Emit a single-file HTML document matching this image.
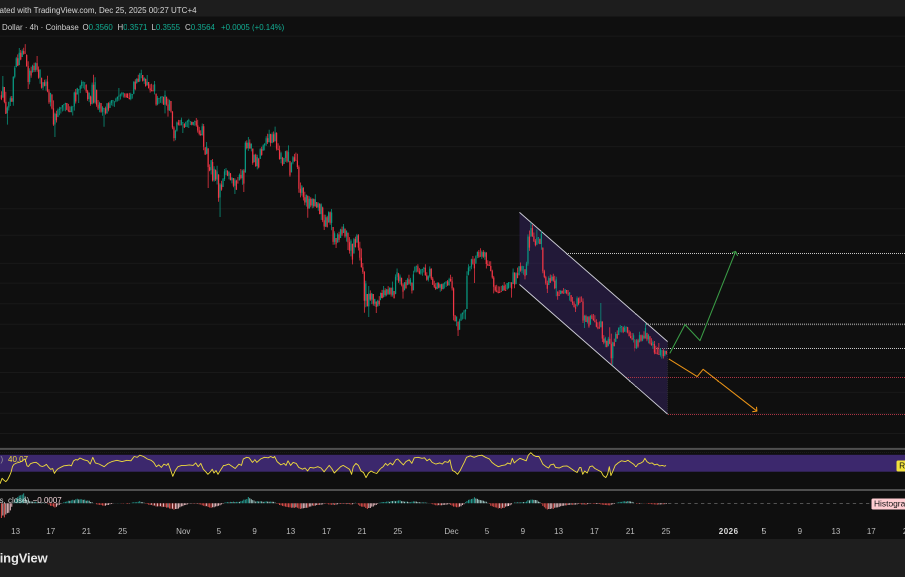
<!DOCTYPE html>
<html><head><meta charset="utf-8"><title>Chart</title>
<style>
html,body{margin:0;padding:0;background:#0f0f0f;}
body{width:905px;height:577px;overflow:hidden;position:relative;font-family:"Liberation Sans",sans-serif;}
#outer{position:absolute;left:0;top:0;width:1810px;height:1154px;transform:scale(0.5);transform-origin:0 0;will-change:transform;overflow:hidden}

#wrap{position:absolute;left:0;top:0;width:1810px;height:1154px;overflow:hidden;background:#0f0f0f;}
#wrap svg{position:absolute;left:0;top:0;width:1810px;height:1154px}
#hdr{position:absolute;left:0;top:0;width:1810px;height:33.2px;background:#1d1d1d;}
#txt{position:absolute;left:0;top:0;width:1810px;height:1154px;}
.hd{position:absolute;left:-1px;top:0px;line-height:41px;font-size:16px;color:#d6d6d6;white-space:nowrap;}
#ftr{position:absolute;left:0;top:1077.6px;width:1810px;height:76.4px;background:#1e1e1e;}
.ft{position:absolute;left:-0.6px;top:1098.2px;line-height:36px;font-size:25.8px;font-weight:bold;color:#e9e9e9;white-space:nowrap;letter-spacing:-0.2px}
.lg{position:absolute;top:42.6px;line-height:24px;font-size:15.8px;white-space:nowrap;color:#d0d0d0}
.t{color:#12ad93}
.tl{position:absolute;top:1051px;width:80px;text-align:center;font-size:16px;line-height:24px;color:#bcbcbc;white-space:nowrap}
.tl.b{font-weight:bold;color:#d8d8d8;letter-spacing:1px;text-indent:1px}
.sm{position:absolute;font-size:16px;line-height:24px;white-space:nowrap}
.tag{position:absolute;font-size:16.8px;line-height:22px;white-space:nowrap;color:#131313;border-radius:3px;padding-left:5.2px}
</style></head><body><div id="outer">
<div id="wrap">
<div id="ftr"></div>
<svg viewBox="0 0 905 577" preserveAspectRatio="none">
<path d="M0 36.1H905M0 66.2H905M0 90.6H905M0 117.3H905M0 146.6H905M0 176.0H905M0 208.8H905M0 235.2H905M0 263.4H905M0 283.1H905M0 303.7H905M0 324.3H905M0 348.2H905M0 372.5H905M0 392.4H905M0 413.3H905M0 433.5H905" stroke="#191919" stroke-width="1" fill="none"/>
<polygon points="519.5,212.4 667.6,341.6 667.6,414.1 519.5,284.5" fill="#2e2152" fill-opacity="0.62"/>
<path d="M566 253.5H905M668 348.5H905" stroke="#c8c8c8" stroke-width="1" stroke-dasharray="1 1" fill="none"/>
<path d="M654 348.5H668" stroke="#8a8a8a" stroke-width="1" stroke-dasharray="1 1" fill="none"/>
<path d="M646 324.3H905" stroke="#858585" stroke-width="1.7" stroke-dasharray="1 1" fill="none"/>
<path d="M626 377.5H905M668 414.5H905" stroke="#ac3444" stroke-width="1" stroke-dasharray="1 1" fill="none"/>
<path d="M667.6 342V414" stroke="#2c2c30" stroke-width="0.8" stroke-dasharray="1 1" fill="none"/>
<path d="M519.5 212.4L667.6 341.6M519.5 284.5L667.6 414.1" stroke="#cfcfd8" stroke-width="0.92" fill="none"/>
<g>
<path d="M2.87 76.0V97.9M7.34 106.2V124.6M8.82 101.8V110.5M10.31 96.4V106.0M13.29 76.2V105.8M14.77 66.1V78.4M16.26 56.9V67.4M19.24 48.0V65.2M22.21 49.4V57.0M29.65 68.3V84.4M32.62 64.8V72.8M35.60 62.4V71.9M40.06 69.3V83.8M43.04 82.1V90.1M46.01 79.3V90.6M50.47 92.8V106.4M54.94 112.6V137.0M57.91 108.5V117.0M59.40 106.9V115.2M60.89 107.3V113.5M62.37 105.1V111.5M63.86 104.3V110.8M65.35 102.9V111.2M71.30 105.8V112.3M72.79 106.4V115.5M74.27 91.6V110.6M77.25 87.9V94.5M78.74 89.3V103.0M80.22 84.9V93.1M81.71 80.3V88.6M83.20 81.7V88.3M84.69 82.4V89.6M89.15 92.4V102.3M92.12 82.5V104.4M95.10 77.3V103.7M99.56 101.8V112.2M102.54 106.1V115.7M104.02 108.0V126.7M107.00 103.2V114.0M109.97 101.2V108.0M111.46 100.1V105.4M112.95 100.3V106.3M114.44 101.4V106.9M115.92 97.7V102.3M117.41 96.5V101.5M118.90 88.0V100.8M120.39 93.5V99.5M121.87 91.9V96.5M123.36 92.6V97.5M130.80 92.8V100.3M132.29 94.1V98.6M133.77 81.3V94.2M136.75 78.2V83.8M139.72 72.9V82.0M141.21 69.8V78.3M144.19 77.2V83.9M147.16 75.0V85.7M154.60 81.0V94.4M157.57 95.9V105.2M159.06 98.3V103.8M160.55 96.4V102.9M162.04 96.3V103.5M165.01 90.6V113.4M169.47 99.6V111.0M175.42 129.7V140.2M176.91 121.5V131.6M181.37 117.6V125.5M182.86 122.2V133.0M185.84 121.6V127.0M187.32 120.0V127.1M188.81 118.7V128.0M190.30 121.2V125.0M193.27 122.0V125.5M194.76 120.5V125.7M202.20 123.5V135.8M206.66 142.0V154.4M211.12 160.1V174.5M214.10 166.2V181.7M217.07 165.7V184.5M220.05 183.1V217.0M223.02 178.0V187.0M224.51 169.0V181.0M226.00 168.0V175.1M228.97 171.4V179.2M231.95 177.1V183.4M234.92 178.3V194.0M239.39 173.5V180.5M242.36 169.6V184.8M245.34 141.3V172.7M248.31 137.0V150.9M251.29 143.3V151.4M254.26 154.0V162.8M257.24 154.7V169.4M260.21 148.3V158.9M263.19 144.4V150.6M264.67 143.2V150.4M266.16 136.3V145.9M269.14 129.8V142.2M272.11 132.4V143.3M275.09 126.6V141.3M281.04 151.8V163.2M284.01 157.9V164.0M285.50 150.9V161.9M288.47 145.4V162.2M291.45 162.3V172.4M292.94 156.0V164.3M301.86 185.1V195.6M306.32 194.5V206.6M309.30 196.2V208.7M312.27 198.3V208.2M315.25 194.3V206.8M318.22 202.2V210.8M321.20 203.4V219.9M325.66 214.7V227.0M328.64 211.4V222.8M331.61 209.0V230.2M334.59 231.2V244.6M337.56 233.1V242.6M340.54 228.7V238.0M343.51 224.0V233.0M346.49 230.4V241.6M350.95 239.2V256.4M353.92 237.9V253.6M356.90 233.9V242.6M365.82 280.8V307.2M368.80 286.0V317.0M371.77 292.9V304.1M374.75 298.7V306.1M377.72 299.8V306.5M380.70 292.5V300.2M383.67 286.0V297.6M386.65 288.9V296.3M389.62 287.5V294.7M392.60 281.6V296.6M395.57 274.4V294.2M397.06 268.5V280.2M400.04 274.5V284.5M404.50 282.1V290.3M407.47 277.9V285.3M410.45 277.9V285.7M413.42 270.7V290.3M414.91 266.5V272.6M416.40 265.8V272.4M420.86 269.2V274.7M422.35 268.9V275.7M423.84 266.9V272.5M428.30 275.4V281.5M429.79 266.4V277.6M437.22 282.1V289.1M440.20 284.2V291.8M443.17 283.2V289.3M444.66 282.4V288.5M446.15 281.4V287.0M449.12 277.7V285.9M456.56 316.4V326.3M459.54 318.7V329.8M461.02 313.4V320.9M462.51 312.5V319.5M464.00 310.0V318.9M465.49 309.4V319.5M466.97 271.3V309.0M468.46 264.3V275.4M469.95 266.1V271.3M471.44 258.8V269.2M475.90 255.4V264.0M477.39 251.5V258.1M481.85 250.5V258.9M484.82 251.7V259.7M502.67 284.9V290.9M507.14 283.0V289.8M508.62 282.1V288.5M510.11 282.4V287.8M513.09 268.5V284.0M516.06 272.2V284.3M519.04 266.2V275.5M522.01 265.6V273.3M523.50 266.4V274.7M526.47 261.7V275.3M527.96 234.4V265.7M530.94 222.6V236.6M536.89 229.4V245.1M538.38 237.1V243.6M541.35 231.0V249.7M548.79 276.2V285.0M551.76 275.1V281.2M556.22 276.7V296.2M560.69 290.2V294.1M565.15 289.0V293.5M569.61 292.1V300.6M577.05 296.4V306.5M584.49 314.9V328.0M587.46 316.1V323.5M590.44 315.2V324.9M600.85 303.0V327.2M605.31 336.7V347.1M608.29 336.9V346.4M612.75 341.7V365.2M615.72 332.1V341.9M618.70 327.4V335.1M620.19 325.0V332.3M621.67 326.0V332.5M624.65 325.6V331.7M626.14 326.6V332.5M633.57 333.3V342.5M636.55 339.0V349.0M639.52 331.7V342.5M642.50 334.8V341.3M645.47 323.4V338.8M648.45 333.9V343.4M652.91 340.5V348.9M660.35 348.1V356.6M661.84 350.4V358.6M664.81 350.5V356.3" stroke="#089981" stroke-width="0.75" fill="none" />
<path d="M1.39 91.2V100.1M4.36 87.0V103.3M5.85 91.8V113.9M11.80 96.0V101.7M17.75 54.4V65.9M20.72 50.0V60.3M23.70 47.8V54.8M25.19 44.1V53.6M26.67 54.3V66.8M28.16 61.3V89.0M31.14 66.7V77.7M34.11 62.7V72.1M37.09 56.0V71.8M38.57 66.5V78.8M41.55 77.8V88.6M44.52 79.8V86.4M47.50 75.8V92.2M48.99 89.2V103.9M51.96 94.2V109.4M53.45 100.4V125.9M56.42 110.8V122.5M66.84 103.0V110.1M68.32 103.9V112.1M69.81 106.3V112.1M75.76 89.0V103.5M86.17 84.1V93.0M87.66 89.9V100.9M90.64 95.6V105.8M93.61 74.7V103.5M96.59 89.7V106.8M98.07 100.0V110.0M101.05 103.0V112.8M105.51 106.6V114.6M108.49 102.2V111.4M124.85 93.0V97.7M126.34 93.4V97.5M127.82 93.4V98.0M129.31 92.9V99.4M135.26 79.2V90.3M138.24 74.7V82.1M142.70 75.0V81.6M145.67 78.5V86.7M148.65 82.0V88.4M150.14 84.2V92.6M151.62 83.8V91.2M153.11 84.6V91.2M156.09 93.5V105.7M163.52 96.8V104.8M166.50 96.8V105.7M167.99 98.6V116.6M170.96 101.0V112.6M172.45 111.1V129.3M173.94 126.3V141.2M178.40 119.9V125.5M179.89 120.0V125.5M184.35 123.3V128.0M191.79 121.8V125.4M196.25 118.0V126.7M197.74 119.8V132.6M199.22 126.9V135.4M200.71 130.3V135.7M203.69 124.0V150.2M205.17 147.1V155.0M208.15 148.1V188.0M209.64 164.4V171.3M212.61 159.0V181.5M215.59 169.4V181.0M218.56 174.2V201.8M221.54 180.7V190.7M227.49 170.2V176.1M230.46 173.0V180.3M233.44 178.1V187.2M236.41 179.8V189.9M237.90 177.0V183.4M240.87 169.0V179.5M243.85 169.1V192.0M246.82 140.4V149.4M249.80 139.4V148.8M252.77 148.5V164.8M255.75 153.8V166.9M258.72 157.9V168.4M261.70 146.8V155.7M267.65 133.8V144.0M270.62 133.7V146.4M273.60 131.5V142.2M276.57 132.3V150.5M278.06 143.3V150.1M279.55 145.6V159.8M282.52 156.9V166.0M286.99 150.2V162.8M289.96 160.7V176.7M294.42 153.9V161.9M295.91 152.6V160.6M297.40 153.8V169.0M298.89 165.4V192.8M300.37 182.5V197.4M303.35 187.1V200.5M304.84 191.7V205.2M307.81 195.4V217.7M310.79 197.2V207.2M313.76 198.5V207.7M316.74 202.0V208.0M319.71 203.2V214.1M322.69 206.6V222.1M324.17 214.6V230.0M327.15 215.7V227.5M330.12 211.5V224.8M333.10 227.0V244.7M336.07 238.0V248.0M339.05 231.7V242.2M342.02 226.6V236.1M345.00 228.6V237.7M347.97 232.4V250.0M349.46 237.1V253.6M352.44 243.5V264.4M355.41 236.6V247.5M358.39 234.1V250.5M359.87 241.8V260.5M361.36 248.5V267.6M362.85 263.0V273.9M364.34 271.1V312.7M367.31 294.0V306.4M370.29 290.4V300.9M373.26 294.0V305.6M376.24 301.3V313.0M379.21 296.1V305.9M382.19 289.9V298.4M385.16 288.3V296.5M388.14 286.1V294.7M391.11 287.7V296.6M394.09 291.0V298.4M398.55 272.9V282.9M401.52 277.8V286.4M403.01 283.4V298.6M405.99 280.0V288.7M408.96 274.7V284.7M411.94 282.3V293.5M417.89 264.3V272.3M419.37 268.1V274.2M425.32 264.3V275.7M426.81 272.2V280.7M431.27 268.3V280.0M432.76 276.9V285.0M434.25 280.8V288.0M435.74 283.1V289.9M438.71 282.2V288.4M441.69 283.7V290.7M447.64 280.0V286.0M450.61 274.7V281.8M452.10 276.9V290.5M453.59 287.4V320.4M455.07 315.0V321.6M458.05 321.5V336.0M472.92 256.0V264.6M474.41 258.5V283.0M478.87 250.0V258.0M480.36 248.3V256.6M483.34 250.1V257.9M486.31 252.0V268.5M487.80 260.2V265.7M489.29 261.2V266.0M490.77 261.2V271.3M492.26 269.7V278.7M493.75 275.9V293.4M495.24 285.2V291.7M496.72 284.7V292.3M498.21 286.3V293.4M499.70 286.5V293.0M501.19 285.9V292.1M504.16 282.0V290.8M505.65 284.5V290.9M511.60 282.3V297.6M514.57 272.2V288.2M517.55 267.6V278.3M520.52 262.5V271.7M524.99 269.3V279.4M529.45 230.5V250.9M532.42 224.8V236.9M533.91 232.5V242.0M535.40 239.1V246.4M539.86 238.8V244.2M542.84 247.3V273.3M544.32 269.8V278.3M545.81 275.8V284.7M547.30 280.6V293.0M550.27 274.5V282.8M553.25 273.8V281.8M554.74 275.8V289.2M557.71 291.2V299.7M559.20 290.1V295.8M562.17 290.6V293.5M563.66 288.0V293.6M566.64 290.0V294.3M568.12 290.0V296.0M571.10 295.1V301.6M572.59 297.0V305.1M574.07 301.2V307.3M575.56 304.3V312.0M578.54 297.5V305.2M580.02 296.6V302.6M581.51 296.4V301.6M583.00 298.4V323.0M585.97 314.7V322.0M588.95 316.0V327.8M591.92 314.1V319.1M593.41 314.0V320.7M594.90 315.2V322.3M596.39 319.3V327.4M597.88 322.2V329.2M599.36 321.5V328.7M602.34 321.3V342.0M603.82 335.1V344.2M606.80 340.7V347.3M609.77 327.2V344.2M611.26 333.6V364.4M614.24 338.6V346.4M617.21 330.4V338.8M623.16 326.6V333.1M627.62 326.9V333.4M629.11 330.2V336.4M630.60 331.5V338.3M632.09 333.0V340.2M635.06 339.0V351.4M638.04 338.8V347.7M641.01 334.5V341.6M643.99 331.2V339.2M646.96 332.9V341.2M649.94 336.2V344.4M651.42 338.2V345.8M654.40 341.0V354.2M655.89 345.7V353.8M657.38 347.2V354.3M658.86 343.0V354.9M663.32 349.1V358.5M666.30 350.7V354.7" stroke="#f23645" stroke-width="0.75" fill="none" />
<path d="M2.87 86.5V97.5M7.34 107.5V113.0M8.82 101.9V107.5M10.31 98.3V101.9M13.29 76.8V101.7M14.77 67.8V76.8M16.26 58.2V67.0M19.24 52.7V65.0M22.21 51.0V57.0M29.65 70.8V82.0M32.62 65.7V72.0M35.60 63.1V70.1M40.06 69.6V77.7M43.04 82.2V87.8M46.01 81.6V85.9M50.47 93.0V102.2M54.94 113.8V124.5M57.91 109.9V117.0M59.40 108.7V109.9M60.89 107.4V108.7M62.37 105.1V107.4M63.86 104.3V105.1M65.35 102.9V104.3M71.30 106.8V112.1M72.79 106.4V107.1M74.27 92.5V106.4M77.25 88.3V94.5M78.74 89.4V90.1M80.22 85.9V89.4M81.71 82.0V85.9M83.20 81.7V82.4M84.69 82.4V83.1M89.15 92.7V99.1M92.12 84.8V103.7M95.10 82.1V102.6M99.56 102.7V108.5M102.54 107.2V111.7M104.02 108.4V109.1M107.00 103.2V113.0M109.97 102.9V108.0M111.46 100.3V102.9M112.95 100.3V101.0M114.44 101.4V102.1M115.92 98.7V101.4M117.41 96.8V98.7M118.90 95.6V96.8M120.39 94.6V95.6M121.87 93.0V94.6M123.36 92.6V93.3M130.80 94.3V99.1M132.29 94.1V94.8M133.77 81.6V93.7M136.75 78.6V83.0M139.72 74.5V81.2M141.21 73.3V74.5M144.19 78.1V80.8M147.16 81.7V85.0M154.60 84.2V91.2M157.57 97.7V104.5M159.06 98.3V99.0M160.55 97.2V98.3M162.04 96.3V97.2M165.01 95.1V104.8M169.47 100.1V110.4M175.42 130.7V138.1M176.91 122.5V130.7M181.37 119.8V124.9M182.86 122.2V122.9M185.84 122.1V127.0M187.32 121.1V122.1M188.81 120.1V121.1M190.30 121.2V121.9M193.27 122.0V124.8M194.76 121.2V122.0M202.20 126.2V135.0M206.66 146.6V153.7M211.12 160.1V170.0M214.10 168.8V180.5M217.07 171.4V179.5M220.05 184.5V197.4M223.02 179.0V187.0M224.51 171.4V179.0M226.00 170.4V171.4M228.97 171.6V175.8M231.95 177.9V180.3M234.92 179.6V185.8M239.39 174.9V180.5M242.36 170.6V178.3M245.34 142.7V172.4M248.31 142.6V148.1M251.29 144.0V148.5M254.26 154.7V162.0M257.24 157.1V166.1M260.21 149.2V158.9M263.19 145.4V150.6M264.67 143.5V145.4M266.16 138.3V143.5M269.14 134.1V142.2M272.11 134.3V142.9M275.09 132.6V141.2M281.04 153.1V159.0M284.01 158.0V164.0M285.50 151.3V158.0M288.47 152.1V161.5M291.45 162.6V172.4M292.94 157.2V162.6M301.86 186.4V192.9M306.32 194.9V202.5M309.30 198.7V208.2M312.27 199.1V205.5M315.25 199.2V206.2M318.22 203.4V207.5M321.20 204.4V214.1M325.66 217.3V226.5M328.64 212.2V222.3M331.61 212.5V222.9M334.59 233.3V241.9M337.56 234.4V242.6M340.54 229.4V238.0M343.51 226.5V233.0M346.49 230.7V236.4M350.95 240.7V250.7M353.92 239.1V253.5M356.90 235.3V242.6M365.82 283.4V300.7M368.80 293.6V306.4M371.77 293.5V299.6M374.75 299.1V303.8M377.72 300.7V306.5M380.70 293.0V300.0M383.67 290.2V297.0M386.65 289.4V295.0M389.62 287.5V293.9M392.60 287.5V294.8M395.57 276.7V294.0M397.06 272.3V276.7M400.04 276.5V281.3M404.50 282.3V290.3M407.47 279.3V285.0M410.45 279.7V283.7M413.42 274.4V290.3M414.91 266.5V271.6M416.40 265.8V266.5M420.86 269.4V273.6M422.35 268.9V269.6M423.84 267.8V268.9M428.30 276.2V279.8M429.79 268.7V276.2M437.22 283.0V288.9M440.20 284.2V287.8M443.17 283.6V289.1M444.66 282.4V283.6M446.15 281.4V282.4M449.12 279.0V285.0M456.56 316.5V321.1M459.54 320.5V329.8M461.02 314.3V320.5M462.51 312.5V314.3M464.00 311.4V312.5M465.49 309.5V311.4M466.97 275.8V309.0M468.46 267.5V274.7M469.95 266.6V267.5M471.44 259.2V266.6M475.90 256.1V263.3M477.39 251.9V256.1M481.85 252.1V256.6M484.82 251.9V256.8M502.67 285.7V290.9M507.14 283.0V289.3M508.62 282.4V283.1M510.11 282.4V283.1M513.09 272.4V284.0M516.06 273.1V284.0M519.04 266.2V275.0M522.01 266.2V270.6M523.50 266.4V267.1M526.47 263.6V275.0M527.96 236.6V263.6M530.94 228.1V236.6M536.89 237.7V244.5M538.38 237.1V237.8M541.35 233.9V244.0M548.79 278.1V285.0M551.76 276.6V280.6M556.22 279.4V288.2M560.69 290.8V294.1M565.15 289.6V293.0M569.61 292.4V294.5M577.05 298.2V306.5M584.49 316.0V320.5M587.46 317.1V322.0M590.44 315.5V324.6M600.85 320.7V327.2M605.31 338.3V342.6M608.29 338.7V345.8M612.75 342.4V358.3M615.72 334.0V341.9M618.70 327.9V335.0M620.19 327.0V327.9M621.67 326.0V327.0M624.65 327.7V331.7M626.14 326.6V327.7M633.57 335.3V339.5M636.55 340.3V348.2M639.52 335.1V341.9M642.50 335.6V340.6M645.47 328.0V338.3M648.45 334.9V339.4M652.91 342.0V345.2M660.35 349.3V354.9M661.84 350.4V351.1M664.81 350.5V355.6" stroke="#089981" stroke-width="1.25" fill="none" />
<path d="M1.39 95.3V99.1M4.36 87.0V101.9M5.85 101.9V113.9M11.80 98.3V101.7M17.75 58.2V65.9M20.72 52.7V59.5M23.70 51.0V53.7M25.19 52.9V53.6M26.67 55.0V66.1M28.16 66.1V82.0M31.14 70.8V75.5M34.11 65.7V70.1M37.09 63.1V69.6M38.57 69.6V77.7M41.55 77.8V87.8M44.52 82.2V85.9M47.50 81.6V91.4M48.99 91.4V102.2M51.96 94.5V108.4M53.45 108.4V124.5M56.42 113.8V120.3M66.84 103.0V109.8M68.32 109.8V110.7M69.81 110.7V112.1M75.76 92.5V101.5M86.17 85.0V91.4M87.66 91.4V99.1M90.64 96.5V104.0M93.61 84.8V102.6M96.59 89.7V104.7M98.07 104.7V108.5M101.05 103.0V111.7M105.51 108.4V113.3M108.49 103.2V109.6M124.85 93.7V96.5M126.34 96.5V97.5M127.82 97.3V98.0M129.31 98.0V99.1M135.26 81.6V89.0M138.24 78.6V81.7M142.70 75.0V80.8M145.67 79.0V86.0M148.65 82.0V88.4M150.14 88.4V90.3M151.62 90.3V91.2M153.11 90.5V91.2M156.09 93.7V104.5M163.52 96.8V104.8M166.50 96.8V104.5M167.99 104.5V110.4M170.96 101.0V111.5M172.45 111.5V127.2M173.94 127.2V138.1M178.40 122.5V124.6M179.89 124.6V125.5M184.35 123.8V127.3M191.79 121.8V124.8M196.25 121.2V125.4M197.74 125.4V130.5M199.22 130.5V133.9M200.71 133.9V135.3M203.69 126.2V146.7M205.17 147.4V154.5M208.15 148.5V167.1M209.64 167.1V170.6M212.61 162.0V180.5M215.59 170.0V179.5M218.56 174.5V197.9M221.54 184.5V189.6M227.49 170.7V175.8M230.46 173.4V180.3M233.44 178.1V185.8M236.41 180.7V189.8M237.90 182.7V183.4M240.87 174.9V178.3M243.85 170.6V183.6M246.82 142.7V148.1M249.80 142.6V148.5M252.77 148.5V163.0M255.75 154.7V166.1M258.72 158.9V167.4M261.70 149.2V154.9M267.65 138.3V142.2M270.62 134.1V142.9M273.60 134.3V142.2M276.57 132.9V148.6M278.06 148.6V150.1M279.55 150.1V159.0M282.52 157.8V164.7M286.99 151.3V161.5M289.96 161.0V175.4M294.42 157.2V161.1M295.91 159.9V160.6M297.40 160.6V167.1M298.89 167.1V188.8M300.37 188.8V192.9M303.35 188.0V197.3M304.84 197.3V202.5M307.81 196.0V208.7M310.79 198.7V205.5M313.76 199.1V206.2M316.74 202.0V207.5M319.71 203.6V214.1M322.69 207.5V220.2M324.17 220.2V226.5M327.15 217.3V227.0M330.12 212.2V222.9M333.10 227.0V241.9M336.07 238.0V244.4M339.05 234.4V239.9M342.02 229.4V234.6M345.00 228.6V236.4M347.97 233.0V242.3M349.46 242.3V250.7M352.44 244.0V259.6M355.41 239.1V247.1M358.39 235.3V247.6M359.87 247.6V257.7M361.36 257.7V267.3M362.85 267.3V272.0M364.34 272.0V300.7M367.31 294.0V306.4M370.29 293.6V299.6M373.26 294.0V303.8M376.24 301.8V307.0M379.21 300.7V304.3M382.19 293.0V297.9M385.16 290.2V295.0M388.14 289.4V293.9M391.11 287.8V294.8M394.09 291.0V298.3M398.55 273.4V281.3M401.52 277.8V284.8M403.01 284.8V291.8M405.99 282.3V288.1M408.96 279.3V283.7M411.94 283.0V290.7M417.89 266.4V271.4M419.37 271.4V273.6M425.32 267.8V275.3M426.81 275.3V279.8M431.27 268.7V278.6M432.76 278.6V284.6M434.25 284.6V286.8M435.74 286.8V288.9M438.71 283.0V287.8M441.69 284.2V289.1M447.64 281.4V285.3M450.61 279.0V281.2M452.10 281.2V288.4M453.59 288.4V315.6M455.07 315.6V321.1M458.05 321.5V330.3M472.92 259.2V263.7M474.41 263.7V268.4M478.87 251.9V256.8M480.36 255.9V256.6M483.34 252.1V256.8M486.31 252.9V264.0M487.80 264.0V265.6M489.29 265.3V266.0M490.77 266.0V271.1M492.26 271.1V277.5M493.75 277.5V286.8M495.24 286.8V290.5M496.72 290.5V291.7M498.21 291.7V293.0M499.70 292.3V293.0M501.19 291.3V292.0M504.16 285.7V290.1M505.65 290.1V290.9M511.60 282.4V288.8M514.57 272.6V284.6M517.55 273.1V278.1M520.52 266.2V270.6M524.99 269.3V276.2M529.45 236.6V247.6M532.42 228.1V236.2M533.91 236.2V241.2M535.40 241.2V245.2M539.86 238.8V244.0M542.84 247.9V271.2M544.32 271.2V277.1M545.81 277.1V283.2M547.30 283.2V288.8M550.27 278.1V282.8M553.25 276.6V280.8M554.74 280.8V288.2M557.71 291.8V295.7M559.20 295.1V295.8M562.17 290.8V293.5M563.66 292.9V293.6M566.64 290.0V293.3M568.12 293.3V294.5M571.10 295.1V301.6M572.59 301.6V303.3M574.07 303.3V307.3M575.56 307.3V308.6M578.54 298.2V304.3M580.02 301.9V302.6M581.51 300.9V301.6M583.00 301.6V320.5M585.97 316.0V322.0M588.95 317.1V326.4M591.92 315.5V318.8M593.41 318.8V320.4M594.90 320.4V322.3M596.39 322.3V326.7M597.88 326.7V328.2M599.36 327.8V328.5M602.34 321.6V338.6M603.82 338.6V342.6M606.80 340.8V347.1M609.77 338.7V343.7M611.26 343.7V358.3M614.24 342.4V346.1M617.21 334.0V338.5M623.16 327.2V332.1M627.62 327.2V332.2M629.11 332.2V336.1M630.60 336.1V338.1M632.09 338.1V339.5M635.06 339.6V348.2M638.04 340.3V346.5M641.01 335.1V340.6M643.99 335.6V338.3M646.96 332.9V339.4M649.94 336.2V343.3M651.42 343.3V345.2M654.40 344.0V352.5M655.89 352.5V353.8M657.38 353.6V354.3M658.86 354.2V354.9M663.32 350.4V356.2M666.30 351.0V353.9" stroke="#f23645" stroke-width="1.25" fill="none" />
</g>
<path d="M669.8 353.4L685 324.6L700 340.6L735.6 251.5M731.9 252.7L735.6 251.4L737.7 255.9" stroke="#3a9c46" stroke-width="1.05" fill="none" stroke-linejoin="round"/>
<path d="M668.8 358.9L697.2 376.6L703.1 369.3L756.9 411.1M756.5 406.8L756.9 411.1L752.3 411.7" stroke="#ea9316" stroke-width="1.05" fill="none" stroke-linejoin="round"/>
<rect x="0" y="447.9" width="905" height="2" fill="#4f4f4f"/>
<rect x="0" y="489" width="905" height="2" fill="#4f4f4f"/>
<rect x="0" y="454.8" width="905" height="16.9" fill="#3c286d"/>
<path d="M0 452.4H905" stroke="#212121" stroke-width="0.8" stroke-dasharray="1 1" fill="none"/>
<polyline points="0.0,483.8 2.1,478.3 4.2,480.4 5.8,481.7 7.6,479.7 9.7,475.5 11.1,472.0 12.5,466.5 13.9,464.4 16.6,463.0 19.4,462.3 22.2,461.0 25.0,458.9 27.0,465.8 28.4,466.5 30.5,463.7 33.3,462.7 36.0,462.3 38.1,463.7 40.2,465.8 42.3,466.5 44.4,465.8 46.4,464.4 48.5,467.2 50.6,469.3 52.7,468.6 54.4,473.4 56.2,470.6 58.2,468.6 61.0,467.2 63.8,465.8 66.6,465.5 69.3,465.1 71.4,465.8 73.5,460.9 75.6,459.6 77.6,460.0 80.0,458.0 83.9,459.8 87.7,460.8 90.2,464.0 92.8,457.3 95.3,462.9 99.0,464.0 104.2,466.7 108.0,463.4 111.8,461.6 116.9,460.3 122.0,461.6 127.0,460.3 130.9,460.8 134.2,456.5 137.2,457.3 139.8,455.2 143.6,456.5 147.4,459.0 151.2,460.3 153.7,462.4 156.3,466.7 158.8,464.9 161.4,467.4 163.9,464.1 166.5,465.4 168.2,463.4 170.8,470.5 172.8,476.3 175.3,470.5 177.9,466.7 181.7,465.4 185.5,465.4 189.3,464.9 193.1,465.4 195.7,462.9 198.2,466.7 200.8,463.4 203.3,469.2 205.8,471.8 207.9,474.3 210.4,471.8 212.2,469.2 214.0,473.0 216.0,470.5 218.0,474.3 221.1,469.2 223.6,465.4 225.0,465.4 228.8,464.1 232.6,466.7 235.2,468.5 239.0,464.1 241.5,465.4 243.3,459.0 246.6,457.3 249.1,457.8 252.4,462.4 255.0,459.8 256.8,462.4 260.6,459.0 264.4,457.3 268.2,457.8 270.7,456.5 273.3,457.8 274.6,456.5 277.1,461.6 280.9,464.9 284.0,463.4 286.0,465.4 288.0,460.8 290.6,465.4 293.1,462.4 296.2,463.4 298.7,467.4 302.5,469.2 305.0,468.0 307.6,471.0 310.1,467.4 313.9,468.0 317.8,466.7 321.0,468.0 324.1,471.8 326.7,468.5 329.2,465.4 331.7,468.5 334.3,473.0 336.8,470.5 340.6,466.7 343.2,465.4 346.5,467.4 349.5,469.2 351.6,474.3 353.3,466.7 355.9,463.4 358.4,465.4 361.0,471.0 363.5,472.5 366.0,477.6 368.6,473.0 371.1,471.0 373.7,472.5 376.7,473.5 380.0,469.2 383.1,466.7 385.6,463.4 387.6,465.4 390.2,462.9 392.7,464.9 395.8,459.8 397.8,459.0 400.9,462.4 403.4,464.9 405.9,461.6 409.2,459.8 411.8,463.4 414.3,457.8 418.1,457.3 422.0,458.3 424.5,457.8 427.0,460.8 429.6,459.0 432.1,462.4 435.9,464.1 439.7,462.9 442.3,464.1 444.8,461.6 448.1,462.4 449.9,459.8 451.2,466.0 452.5,470.5 455.1,471.8 457.6,474.3 460.2,470.5 462.7,465.4 464.7,461.6 466.5,457.3 470.3,455.8 474.1,457.3 478.0,455.8 481.8,455.2 485.6,457.3 489.4,459.0 491.9,462.4 495.2,464.9 498.3,466.7 502.1,465.4 505.4,464.9 507.9,462.9 510.5,464.1 512.3,458.3 514.3,462.9 516.6,460.8 519.9,458.3 523.7,459.8 526.2,460.8 528.3,455.2 530.8,452.7 533.4,455.2 535.9,456.5 538.9,456.5 541.0,460.3 542.8,464.1 546.1,466.7 548.6,468.0 550.4,464.9 553.7,464.1 555.5,467.4 559.3,468.0 563.1,466.2 566.9,465.9 569.4,467.4 572.0,469.2 574.5,471.0 577.1,472.5 579.6,467.4 580.9,467.4 582.7,474.3 584.7,471.0 587.2,473.0 589.8,466.7 592.3,465.9 594.9,468.5 598.7,470.5 601.2,471.8 603.2,475.6 605.8,477.6 607.6,474.3 609.3,466.7 610.9,475.6 612.6,471.8 615.2,465.4 618.2,462.9 621.5,460.8 625.3,461.6 627.9,460.3 630.9,462.4 633.5,464.1 636.0,466.7 638.0,464.1 641.1,462.9 643.1,461.6 644.9,458.3 646.9,461.6 649.5,463.4 652.0,462.9 654.6,464.9 657.1,464.1 659.6,465.9 662.2,465.4 664.7,466.2 666.0,465.4" stroke="#f0dc3c" stroke-width="0.9" fill="none" stroke-linejoin="round"/>
<path d="M13.29 503.3V502.7M14.77 503.3V500.2M16.26 503.3V498.2M17.75 503.3V497.1M19.24 503.3V495.6M20.72 503.3V495.3M22.21 503.3V494.6M23.70 503.3V493.4M35.60 503.3V501.8M38.57 503.3V502.1M43.04 503.3V502.3M46.01 503.3V502.7M62.37 503.3V503.0M63.86 503.3V502.2M65.35 503.3V501.9M66.84 503.3V501.5M68.32 503.3V500.8M71.30 503.3V500.4M72.79 503.3V499.8M75.76 503.3V499.2M77.25 503.3V498.7M80.22 503.3V499.2M81.71 503.3V499.2M84.69 503.3V499.6M87.66 503.3V500.5M114.44 503.3V503.1M118.90 503.3V503.0M124.85 503.3V503.1M130.80 503.3V503.1M132.29 503.3V502.5M133.77 503.3V502.3M135.26 503.3V502.2M136.75 503.3V502.1M138.24 503.3V501.7M139.72 503.3V501.1M224.51 503.3V502.8M226.00 503.3V502.3M227.49 503.3V502.1M230.46 503.3V501.9M233.44 503.3V501.6M236.41 503.3V501.9M237.90 503.3V501.9M240.87 503.3V501.1M242.36 503.3V500.7M243.85 503.3V499.6M245.34 503.3V499.6M246.82 503.3V499.0M248.31 503.3V497.0M257.24 503.3V501.1M260.21 503.3V501.2M264.67 503.3V501.8M266.16 503.3V501.3M270.62 503.3V501.6M355.41 503.3V502.8M379.21 503.3V502.7M380.70 503.3V502.6M382.19 503.3V502.1M383.67 503.3V502.0M385.16 503.3V502.0M386.65 503.3V501.6M388.14 503.3V501.4M391.11 503.3V501.0M394.09 503.3V500.8M397.06 503.3V500.8M398.55 503.3V500.5M400.04 503.3V500.2M405.99 503.3V501.6M410.45 503.3V502.2M411.94 503.3V501.8M413.42 503.3V501.4M422.35 503.3V502.4M425.32 503.3V502.4M465.49 503.3V502.3M466.97 503.3V501.0M468.46 503.3V499.9M469.95 503.3V499.5M471.44 503.3V499.0M472.92 503.3V498.6M474.41 503.3V497.3M513.09 503.3V503.1M514.57 503.3V502.5M517.55 503.3V502.2M520.52 503.3V502.4M522.01 503.3V502.1M524.99 503.3V502.0M526.47 503.3V501.5M527.96 503.3V500.1M530.94 503.3V499.6M532.42 503.3V499.6M615.72 503.3V503.1M617.21 503.3V502.6M618.70 503.3V502.2M620.19 503.3V501.9M621.67 503.3V501.9M623.16 503.3V501.4M624.65 503.3V501.2M627.62 503.3V501.1M642.50 503.3V503.0M645.47 503.3V503.1" stroke="#26a69a" stroke-width="0.9" fill="none" />
<path d="M25.19 503.3V496.5M26.67 503.3V499.9M28.16 503.3V500.3M29.65 503.3V501.2M31.14 503.3V501.5M32.62 503.3V501.6M34.11 503.3V501.9M37.09 503.3V502.3M40.06 503.3V502.4M41.55 503.3V502.6M44.52 503.3V502.9M69.81 503.3V500.9M74.27 503.3V500.2M78.74 503.3V499.5M83.20 503.3V499.9M86.17 503.3V500.7M89.15 503.3V500.8M90.64 503.3V502.0M92.12 503.3V502.3M93.61 503.3V503.1M95.10 503.3V503.1M115.92 503.3V503.1M117.41 503.3V503.1M120.39 503.3V503.1M141.21 503.3V502.1M142.70 503.3V502.2M144.19 503.3V502.8M228.97 503.3V502.4M231.95 503.3V502.0M234.92 503.3V502.1M239.39 503.3V501.9M249.80 503.3V498.2M251.29 503.3V499.2M252.77 503.3V500.1M254.26 503.3V500.5M255.75 503.3V501.5M258.72 503.3V501.5M261.70 503.3V501.4M263.19 503.3V501.9M267.65 503.3V501.6M269.14 503.3V501.7M272.11 503.3V501.8M273.60 503.3V501.9M275.09 503.3V502.5M389.62 503.3V501.9M392.60 503.3V501.1M395.57 503.3V501.2M401.52 503.3V501.2M403.01 503.3V501.3M404.50 503.3V501.8M407.47 503.3V501.7M408.96 503.3V502.3M414.91 503.3V501.5M416.40 503.3V501.6M417.89 503.3V502.1M419.37 503.3V502.3M420.86 503.3V502.5M423.84 503.3V502.5M426.81 503.3V502.7M428.30 503.3V503.1M429.79 503.3V503.1M475.90 503.3V498.5M477.39 503.3V498.9M478.87 503.3V499.8M480.36 503.3V500.1M481.85 503.3V500.4M483.34 503.3V500.8M484.82 503.3V501.5M486.31 503.3V501.7M487.80 503.3V502.9M516.06 503.3V502.6M519.04 503.3V502.5M523.50 503.3V502.1M529.45 503.3V500.4M533.91 503.3V499.9M535.40 503.3V500.0M536.89 503.3V500.3M538.38 503.3V501.6M539.86 503.3V502.1M626.14 503.3V501.6M629.11 503.3V501.2M630.60 503.3V501.5M632.09 503.3V501.9M633.57 503.3V502.5M635.06 503.3V503.1" stroke="#b2dfdb" stroke-width="0.9" fill="none" />
<path d="M1.39 503.3V518.0M4.36 503.3V517.4M47.50 503.3V503.6M48.99 503.3V504.5M50.47 503.3V505.8M51.96 503.3V506.0M53.45 503.3V506.6M54.94 503.3V507.5M96.59 503.3V504.2M98.07 503.3V504.6M99.56 503.3V504.8M101.05 503.3V505.0M102.54 503.3V505.5M104.02 503.3V505.8M121.87 503.3V503.6M123.36 503.3V503.6M126.34 503.3V503.6M127.82 503.3V503.7M145.67 503.3V503.6M147.16 503.3V504.0M148.65 503.3V504.6M150.14 503.3V505.0M153.11 503.3V505.6M156.09 503.3V506.5M159.06 503.3V506.4M162.04 503.3V507.1M165.01 503.3V507.0M166.50 503.3V507.6M169.47 503.3V508.2M170.96 503.3V508.4M173.94 503.3V509.7M193.27 503.3V503.8M196.25 503.3V503.7M199.22 503.3V504.2M200.71 503.3V504.5M202.20 503.3V505.3M203.69 503.3V505.8M205.17 503.3V506.3M208.15 503.3V507.0M209.64 503.3V507.5M211.12 503.3V507.9M276.57 503.3V503.6M278.06 503.3V504.0M279.55 503.3V505.0M281.04 503.3V505.2M282.52 503.3V505.9M284.01 503.3V506.3M285.50 503.3V506.6M286.99 503.3V507.0M288.47 503.3V507.2M289.96 503.3V507.4M291.45 503.3V507.7M294.42 503.3V507.9M297.40 503.3V507.8M298.89 503.3V508.3M300.37 503.3V508.9M307.81 503.3V507.8M313.76 503.3V505.9M318.22 503.3V505.0M325.66 503.3V503.7M327.15 503.3V503.8M328.64 503.3V504.4M330.12 503.3V504.5M331.61 503.3V504.8M334.59 503.3V505.0M340.54 503.3V504.0M343.51 503.3V503.9M346.49 503.3V504.1M349.46 503.3V504.1M350.95 503.3V504.5M356.90 503.3V503.6M358.39 503.3V504.6M359.87 503.3V505.9M361.36 503.3V506.6M362.85 503.3V506.7M364.34 503.3V506.8M365.82 503.3V508.0M367.31 503.3V508.6M431.27 503.3V503.7M432.76 503.3V504.2M434.25 503.3V504.6M435.74 503.3V505.2M437.22 503.3V505.4M440.20 503.3V505.3M450.61 503.3V504.9M452.10 503.3V505.6M453.59 503.3V506.6M455.07 503.3V506.6M456.56 503.3V507.2M458.05 503.3V507.3M489.29 503.3V503.9M490.77 503.3V505.8M492.26 503.3V506.3M493.75 503.3V506.9M495.24 503.3V507.4M496.72 503.3V507.6M498.21 503.3V508.2M501.19 503.3V508.4M504.16 503.3V508.0M541.35 503.3V503.7M542.84 503.3V505.9M544.32 503.3V507.3M545.81 503.3V508.3M547.30 503.3V509.5M553.25 503.3V508.8M566.64 503.3V505.4M572.59 503.3V504.7M580.02 503.3V504.0M581.51 503.3V504.4M584.49 503.3V504.4M585.97 503.3V504.8M591.92 503.3V503.6M593.41 503.3V503.7M594.90 503.3V504.0M599.36 503.3V504.0M600.85 503.3V504.4M602.34 503.3V504.6M603.82 503.3V504.9M605.31 503.3V505.0M606.80 503.3V505.1M608.29 503.3V505.3M609.77 503.3V505.4M636.55 503.3V503.7M638.04 503.3V503.8M643.99 503.3V503.6M646.96 503.3V503.6M648.45 503.3V503.9M649.94 503.3V504.0M651.42 503.3V504.1M652.91 503.3V504.2M654.40 503.3V504.4M655.89 503.3V504.5M657.38 503.3V504.6M663.32 503.3V504.3" stroke="#ef5350" stroke-width="0.9" fill="none" />
<path d="M2.87 503.3V515.5M5.85 503.3V514.5M7.34 503.3V513.1M8.82 503.3V512.8M10.31 503.3V510.4M11.80 503.3V506.7M56.42 503.3V506.7M57.91 503.3V505.2M59.40 503.3V504.8M60.89 503.3V503.9M105.51 503.3V505.6M107.00 503.3V505.0M108.49 503.3V504.9M109.97 503.3V504.2M111.46 503.3V504.0M112.95 503.3V503.6M129.31 503.3V503.6M151.62 503.3V504.8M154.60 503.3V505.5M157.57 503.3V506.4M160.55 503.3V506.3M163.52 503.3V506.8M167.99 503.3V507.5M172.45 503.3V508.4M175.42 503.3V508.9M176.91 503.3V508.7M178.40 503.3V508.3M179.89 503.3V507.3M181.37 503.3V506.4M182.86 503.3V506.1M184.35 503.3V505.1M185.84 503.3V505.0M187.32 503.3V504.4M188.81 503.3V503.6M190.30 503.3V503.6M191.79 503.3V503.6M194.76 503.3V503.6M197.74 503.3V503.7M206.66 503.3V506.1M212.61 503.3V507.3M214.10 503.3V507.2M215.59 503.3V506.5M217.07 503.3V506.2M218.56 503.3V505.7M220.05 503.3V505.2M221.54 503.3V504.4M223.02 503.3V503.9M292.94 503.3V507.6M295.91 503.3V507.3M301.86 503.3V508.2M303.35 503.3V508.1M304.84 503.3V508.0M306.32 503.3V507.8M309.30 503.3V506.6M310.79 503.3V506.5M312.27 503.3V505.5M315.25 503.3V505.6M316.74 503.3V505.0M319.71 503.3V504.8M321.20 503.3V504.6M322.69 503.3V504.4M324.17 503.3V503.7M333.10 503.3V504.5M336.07 503.3V504.5M337.56 503.3V504.2M339.05 503.3V503.8M342.02 503.3V503.7M345.00 503.3V503.8M347.97 503.3V504.0M352.44 503.3V504.3M353.92 503.3V503.8M368.80 503.3V508.0M370.29 503.3V508.0M371.77 503.3V506.6M373.26 503.3V506.5M374.75 503.3V505.2M376.24 503.3V505.0M377.72 503.3V503.9M438.71 503.3V505.1M441.69 503.3V505.3M443.17 503.3V504.9M444.66 503.3V504.8M446.15 503.3V504.6M447.64 503.3V504.4M449.12 503.3V504.1M459.54 503.3V506.6M461.02 503.3V506.3M462.51 503.3V505.0M464.00 503.3V504.2M499.70 503.3V508.0M502.67 503.3V507.8M505.65 503.3V506.6M507.14 503.3V506.3M508.62 503.3V506.0M510.11 503.3V505.3M511.60 503.3V504.4M548.79 503.3V508.6M550.27 503.3V508.5M551.76 503.3V508.3M554.74 503.3V507.7M556.22 503.3V507.5M557.71 503.3V507.4M559.20 503.3V506.9M560.69 503.3V506.2M562.17 503.3V505.9M563.66 503.3V505.8M565.15 503.3V505.4M568.12 503.3V505.0M569.61 503.3V504.8M571.10 503.3V504.6M574.07 503.3V504.6M575.56 503.3V504.5M577.05 503.3V504.4M578.54 503.3V503.8M583.00 503.3V504.4M587.46 503.3V504.1M588.95 503.3V503.9M590.44 503.3V503.6M596.39 503.3V504.0M597.88 503.3V503.9M611.26 503.3V504.6M612.75 503.3V504.3M614.24 503.3V504.0M639.52 503.3V503.8M641.01 503.3V503.6M658.86 503.3V504.4M660.35 503.3V504.4M661.84 503.3V504.3M664.81 503.3V504.1M666.30 503.3V504.0" stroke="#ffcdd2" stroke-width="0.9" fill="none" />
<path d="M668 503.5H871" stroke="#6a6a6a" stroke-width="0.8" stroke-dasharray="3.3 3.3" fill="none"/>
</svg>
<div id="hdr"></div><div id="txt"><span class="hd">ated with TradingView.com, Dec 25, 2025 00:27 UTC+4</span>
<span class="lg" style="left:4px">Dollar · 4h · Coinbase</span>
<span class="lg" style="left:165px">O<span class="t">0.3560</span></span>
<span class="lg" style="left:235px">H<span class="t">0.3571</span></span>
<span class="lg" style="left:303px">L<span class="t">0.3555</span></span>
<span class="lg" style="left:370px">C<span class="t">0.3564</span></span>
<span class="lg t" style="left:442px">+0.0005 (+0.14%)</span>
<span class="sm" style="left:1px;top:906.6px;color:#9a9a9a">)</span>
<span class="sm" style="left:16px;top:906.6px;color:#f0dc3c">40.07</span>
<span class="sm" style="left:-1px;top:989px;color:#cfcfcf">s, close)</span>
<span class="sm" style="left:65.2px;top:989px;color:#f3d6da">−0.0007</span>
<span class="tag" style="left:1793px;top:921.4px;width:40px;background:#f2e23c">RSI</span>
<span class="tag" style="left:1742.8px;top:996.6px;width:80px;background:#ffcdd2">Histogram</span>
<span class="tl" style="left:-8.8px">13</span><span class="tl" style="left:61.4px">17</span><span class="tl" style="left:133px">21</span><span class="tl" style="left:205.2px">25</span><span class="tl" style="left:326.6px">Nov</span><span class="tl" style="left:397.6px">5</span><span class="tl" style="left:469.2px">9</span><span class="tl" style="left:541.4px">13</span><span class="tl" style="left:613px">17</span><span class="tl" style="left:684px">21</span><span class="tl" style="left:755.6px">25</span><span class="tl" style="left:863px">Dec</span><span class="tl" style="left:934px">5</span><span class="tl" style="left:1005.6px">9</span><span class="tl" style="left:1077.2px">13</span><span class="tl" style="left:1148.8px">17</span><span class="tl" style="left:1220.6px">21</span><span class="tl" style="left:1292px">25</span><span class="tl b" style="left:1416.8px">2026</span><span class="tl" style="left:1488.2px">5</span><span class="tl" style="left:1559.8px">9</span><span class="tl" style="left:1631.8px">13</span><span class="tl" style="left:1702.6px">17</span><span class="tl" style="left:1774.6px">21</span>
<span class="ft">ingView</span></div>
</div>
</div></body></html>
